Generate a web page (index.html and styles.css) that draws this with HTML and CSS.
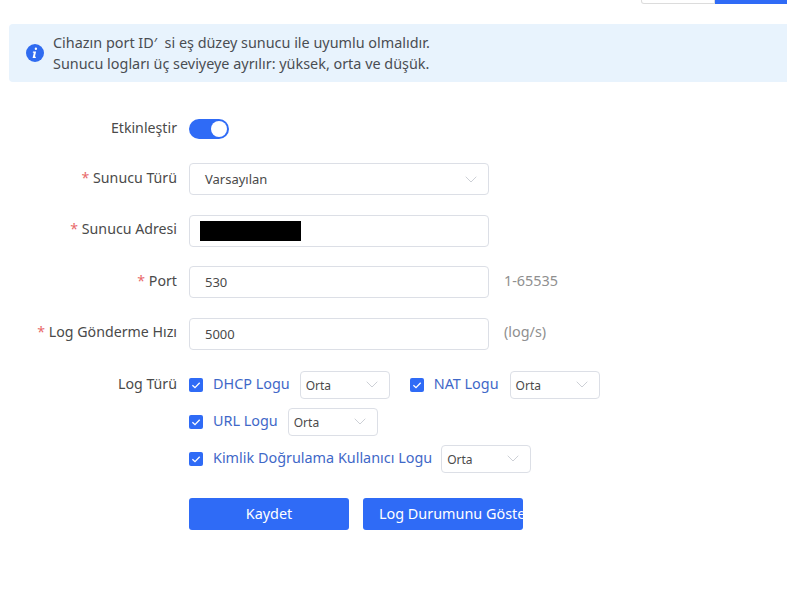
FILE: index.html
```html
<!DOCTYPE html>
<html lang="tr">
<head>
<meta charset="utf-8">
<title>Sunucu Logu</title>
<link rel="stylesheet" href="styles.css">
</head>
<body>
<div class="topbar"><span class="top-btn"></span><span class="top-btn primary"></span></div>
<div class="alert">
  <svg class="alert-icon" viewBox="0 0 18 18" width="18" height="18"><circle cx="9" cy="9" r="9" fill="#2f6bf0"/><path d="M9.9 3.6a1.2 1.2 0 1 1-.01 2.4 1.2 1.2 0 0 1 .01-2.4zM7 7.6h3.1l-1.2 5.2h1.1l-.3 1.1H6.6l1.2-5.2H6.8z" fill="#fff"/></svg>
  <div class="alert-text">
    <div>Cihazın port ID&#8242;&nbsp; si eş düzey sunucu ile uyumlu olmalıdır.</div>
    <div>Sunucu logları üç seviyeye ayrılır: yüksek, orta ve düşük.</div>
  </div>
</div>
<form class="form">
  <div class="row switch-row">
    <label class="label">Etkinleştir</label>
    <span class="switch"><span class="knob"></span></span>
  </div>
  <div class="row">
    <label class="label"><i>*</i> Sunucu Türü</label>
    <div class="field select-field"><span>Varsayılan</span><svg class="chev" viewBox="0 0 12 7" width="12" height="7"><path d="M.7.7 6 6 11.3.7" fill="none" stroke="#cdd0d6" stroke-width="1"/></svg></div>
  </div>
  <div class="row">
    <label class="label"><i>*</i> Sunucu Adresi</label>
    <div class="field"><span class="redact"></span></div>
  </div>
  <div class="row">
    <label class="label"><i>*</i> Port</label>
    <div class="field"><span>530</span></div>
    <span class="hint">1-65535</span>
  </div>
  <div class="row">
    <label class="label"><i>*</i> Log Gönderme Hızı</label>
    <div class="field"><span>5000</span></div>
    <span class="hint">(log/s)</span>
  </div>
  <div class="row log-row">
    <label class="label">Log Türü</label>
    <div class="log-lines">
      <div class="log-line">
        <span class="check"><svg viewBox="0 0 14 14" width="14" height="14"><path d="M3.4 7.2 6 9.7l4.7-5" fill="none" stroke="#fff" stroke-width="1.3"/></svg></span>
        <span class="log-name">DHCP Logu</span>
        <span class="mini"><span>Orta</span><svg class="chev" viewBox="0 0 12 7" width="12" height="7"><path d="M.7.7 6 6 11.3.7" fill="none" stroke="#cdd0d6" stroke-width="1"/></svg></span>
        <span class="check second"><svg viewBox="0 0 14 14" width="14" height="14"><path d="M3.4 7.2 6 9.7l4.7-5" fill="none" stroke="#fff" stroke-width="1.3"/></svg></span>
        <span class="log-name nat">NAT Logu</span>
        <span class="mini"><span>Orta</span><svg class="chev" viewBox="0 0 12 7" width="12" height="7"><path d="M.7.7 6 6 11.3.7" fill="none" stroke="#cdd0d6" stroke-width="1"/></svg></span>
      </div>
      <div class="log-line">
        <span class="check"><svg viewBox="0 0 14 14" width="14" height="14"><path d="M3.4 7.2 6 9.7l4.7-5" fill="none" stroke="#fff" stroke-width="1.3"/></svg></span>
        <span class="log-name">URL Logu</span>
        <span class="mini"><span>Orta</span><svg class="chev" viewBox="0 0 12 7" width="12" height="7"><path d="M.7.7 6 6 11.3.7" fill="none" stroke="#cdd0d6" stroke-width="1"/></svg></span>
      </div>
      <div class="log-line">
        <span class="check"><svg viewBox="0 0 14 14" width="14" height="14"><path d="M3.4 7.2 6 9.7l4.7-5" fill="none" stroke="#fff" stroke-width="1.3"/></svg></span>
        <span class="log-name long">Kimlik Doğrulama Kullanıcı Logu</span>
        <span class="mini"><span>Orta</span><svg class="chev" viewBox="0 0 12 7" width="12" height="7"><path d="M.7.7 6 6 11.3.7" fill="none" stroke="#cdd0d6" stroke-width="1"/></svg></span>
      </div>
    </div>
  </div>
  <div class="actions">
    <button type="button" class="btn">Kaydet</button>
    <button type="button" class="btn clip"><span>Log Durumunu Göster</span></button>
  </div>
</form>
</body>
</html>
```
FILE: styles.css
```css
* { box-sizing: border-box; }
html, body { margin: 0; padding: 0; }
body {
  width: 787px;
  height: 614px;
  overflow: hidden;
  background: #fff;
  color: #4a4a4a;
  font-family: "Noto Sans", "Open Sans", sans-serif;
  font-size: 14.4px;
}
.topbar { height: 4px; display: flex; justify-content: flex-end; overflow: hidden; }
.top-btn { width: 74px; height: 4px; background: #fff; border: 1px solid #dcdcdc; border-top: 0; border-radius: 0 0 0 3px; }
.top-btn.primary { width: 72px; background: #2f6bf6; border: 0; border-radius: 0; }
.alert {
  margin: 20px 0 0 9px;
  height: 58px;
  background: #e8f3fd;
  border-radius: 4px 0 0 4px;
  display: flex;
  align-items: center;
  padding-left: 17px;
}
.alert-icon { flex: none; margin-right: 9px; }
.alert-text { line-height: 21px; color: #4a4d52; }
.form { margin-top: 35px; }
.row { display: flex; align-items: center; height: 32px; margin-bottom: 19.67px; }
.switch-row { height: 24px; margin-bottom: 22px; }
.label { width: 177px; text-align: right; margin-right: 12px; flex: none; position: relative; top: -2px; font-size: 14.2px; }
.label i { color: #e8696a; font-style: normal; }
.switch { width: 40px; height: 20px; border-radius: 10px; background: #2f6bf6; position: relative; display: block; }
.knob { position: absolute; right: 2px; top: 2px; width: 16px; height: 16px; border-radius: 50%; background: #fff; }
.field {
  width: 300px;
  height: 32px;
  border: 1px solid #dcdfe6;
  border-radius: 4px;
  display: flex;
  align-items: center;
  padding: 0 15px;
  font-size: 13px;
  justify-content: space-between;
}
.chev { flex: none; }
.select-field { padding-right: 11px; }
.field:has(.redact) { padding-left: 10px; }
.redact { display: block; width: 101px; height: 20px; background: #000; }
.hint { margin-left: 15px; color: #8f8f8f; position: relative; top: -2px; }
.log-row { height: auto; align-items: flex-start; margin-bottom: 0; padding-top: 1px; }
.log-row .label { top: 1px; line-height: 24px; }
.log-lines { display: flex; flex-direction: column; gap: 9px; }
.log-line { display: flex; align-items: center; height: 28px; }
.check { width: 14px; height: 14px; background: #2f6bf6; border-radius: 2px; display: block; flex: none; }
.check svg { display: block; }
.check.second { margin-left: 20px; }
.log-name { color: #3f68c8; margin-left: 10px; margin-right: 10px; position: relative; top: -1px; }
.log-name.nat { margin-right: 11px; }
.log-name.long { margin-right: 9px; }
.mini {
  width: 90px;
  height: 28px;
  border: 1px solid #dcdfe6;
  border-radius: 4px;
  display: flex;
  align-items: center;
  justify-content: space-between;
  padding: 0 11px 0 5px;
  font-size: 12px;
}
.mini span { position: relative; top: 1px; }
.actions { display: flex; gap: 14px; margin: 25px 0 0 189px; }
.btn {
  width: 160px;
  height: 32px;
  background: #2f6bf6;
  color: #fff;
  border: 0;
  border-radius: 3px;
  font: inherit;
  padding: 0;
}
.clip { overflow: hidden; white-space: nowrap; text-align: left; padding-left: 16px; }
```
